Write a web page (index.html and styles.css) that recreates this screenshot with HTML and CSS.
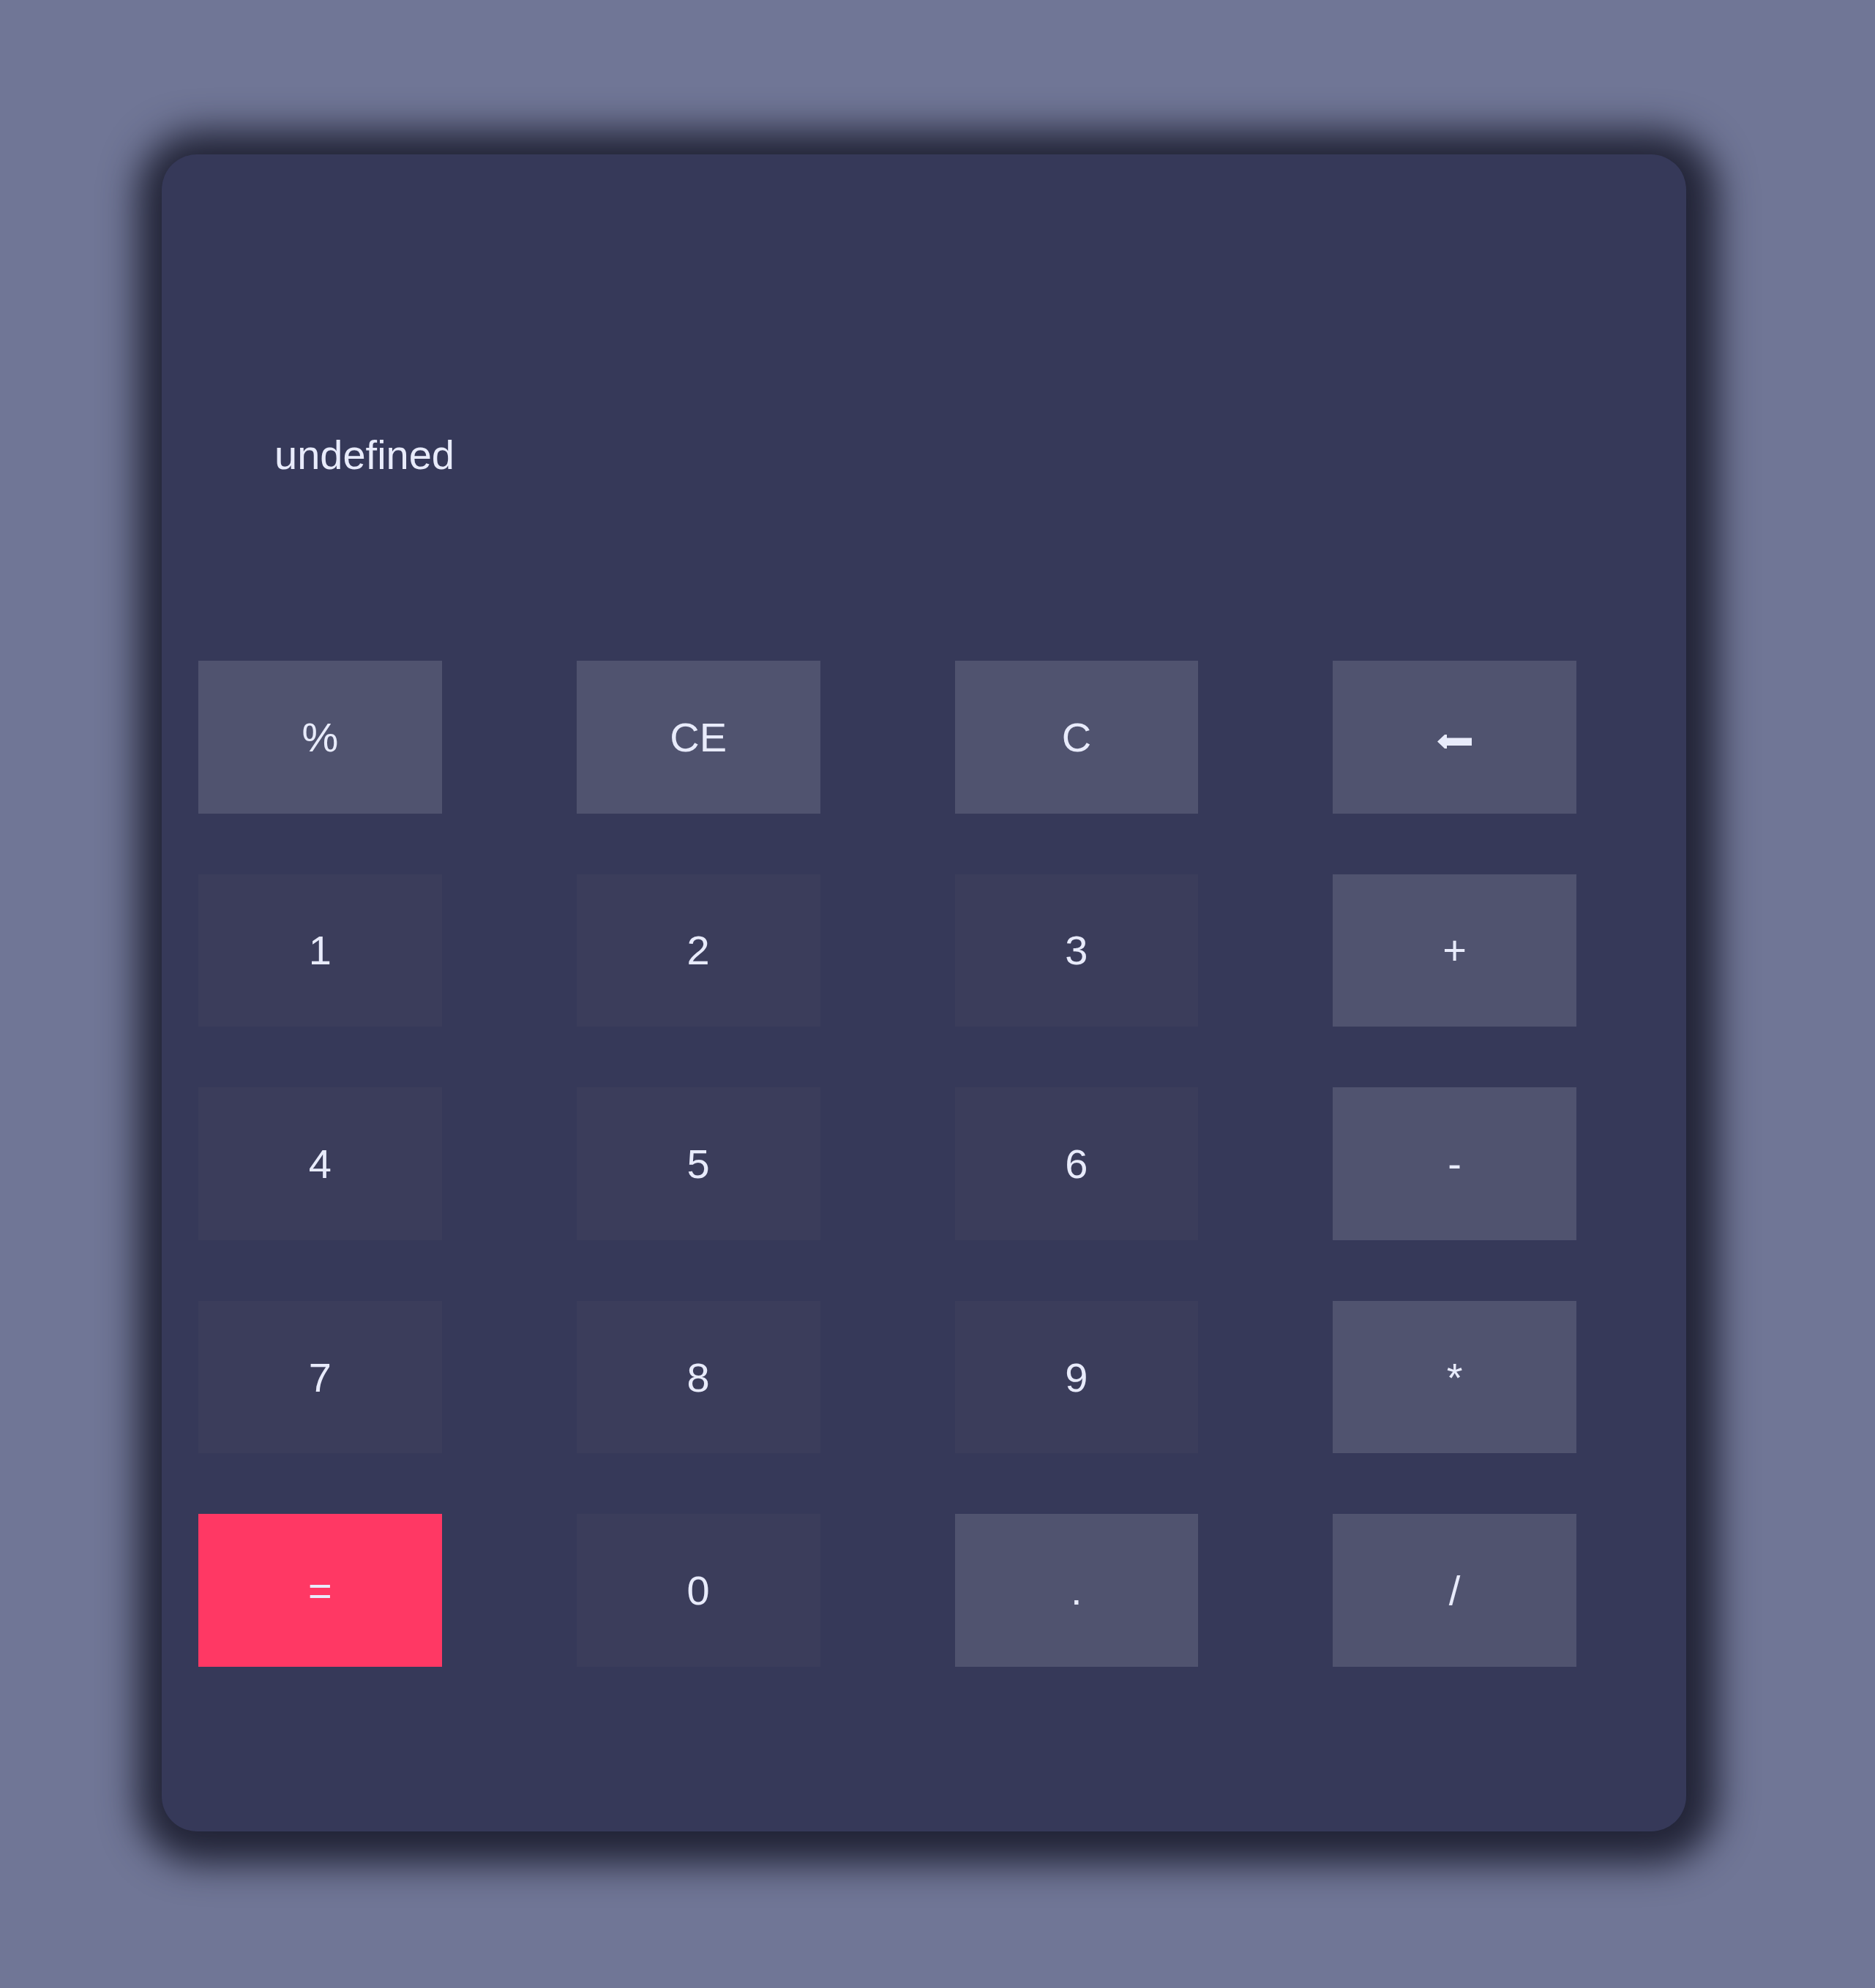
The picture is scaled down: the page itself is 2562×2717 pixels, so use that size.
FILE: index.html
```
<!DOCTYPE html>
<html lang="en">
<head>
  <meta charset="utf-8">
  <title>Calculator</title>
  <link rel="stylesheet" href="styles.css">
</head>
<body>
  <main class="calculator">
    <input class="display" type="text" value="undefined" aria-label="Result" readonly>
    <div class="keys">
      <button class="key key-op" type="button">%</button>
      <button class="key key-op" type="button">CE</button>
      <button class="key key-op" type="button">C</button>
      <button class="key key-op" type="button" aria-label="Backspace">
        <svg class="arrow" viewBox="0 0 48 34" aria-hidden="true"><path d="M0 23.500L10 14H13V18.500H47V29H13V33H10Z"/></svg>
      </button>
      <button class="key" type="button">1</button>
      <button class="key" type="button">2</button>
      <button class="key" type="button">3</button>
      <button class="key key-op" type="button">+</button>
      <button class="key" type="button">4</button>
      <button class="key" type="button">5</button>
      <button class="key" type="button">6</button>
      <button class="key key-op" type="button">-</button>
      <button class="key" type="button">7</button>
      <button class="key" type="button">8</button>
      <button class="key" type="button">9</button>
      <button class="key key-op" type="button">*</button>
      <button class="key key-equals" type="button">=</button>
      <button class="key" type="button">0</button>
      <button class="key key-op" type="button">.</button>
      <button class="key key-op" type="button">/</button>
    </div>
  </main>
</body>
</html>
```
FILE: styles.css
```
* {
  box-sizing: border-box;
}

body {
  margin: 0;
  padding: 211px 258px 211px 221px;
  background: #707696;
  color: #e8ebfb;
  font-family: "Liberation Sans", Arial, sans-serif;
  font-size: 56px;
}

.calculator {
  display: flex;
  flex-direction: column;
  gap: 172px;
  padding: 300px 150px 225px 50px;
  border-radius: 48px;
  background: #363959;
  box-shadow: 5px 6px 50px 38px #222437;
}

.display {
  width: 100%;
  height: 220px;
  padding: 0 104px;
  border: 0;
  outline: 0;
  background: transparent;
  color: inherit;
  font: inherit;
}

.keys {
  display: grid;
  grid-template-columns: repeat(4, 1fr);
  grid-template-rows: repeat(5, 1fr);
  gap: 83px 184px;
  min-height: 1375px;
}

.key {
  display: flex;
  align-items: center;
  justify-content: center;
  padding: 0;
  border: 0;
  background: #3b3d5b;
  color: inherit;
  font: inherit;
}

.key-op {
  background: #50536f;
}

.key-equals {
  background: #ff3864;
}

.arrow {
  width: 48px;
  height: 34px;
  fill: currentColor;
}
```
